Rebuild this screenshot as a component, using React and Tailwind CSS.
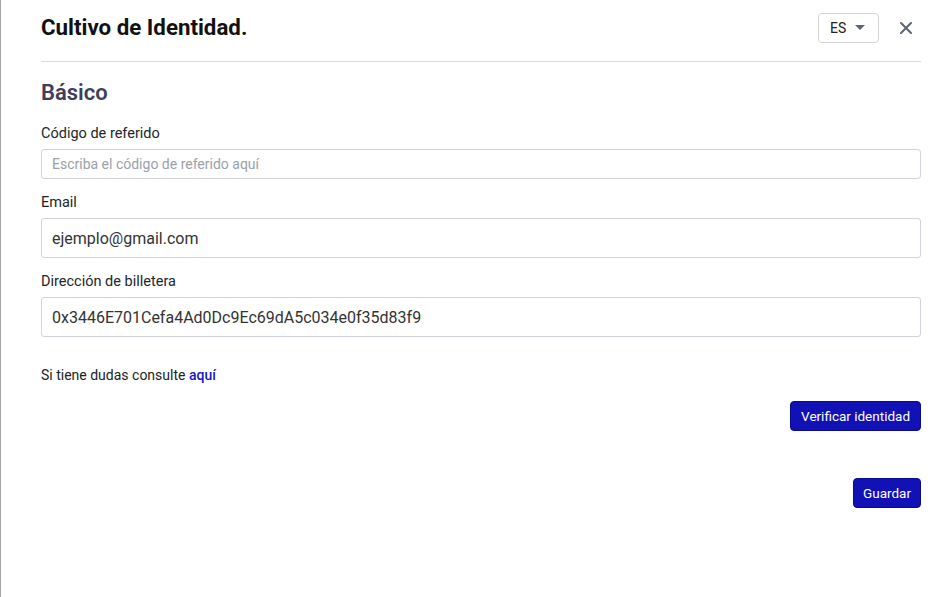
import React from "react";

function Caret() {
  return (
    <svg width="10" height="6" viewBox="0 0 10 6" className="ml-[9px]">
      <path d="M0 0 L10 0 L5 5 Z" fill="#5b6573" />
    </svg>
  );
}

function CloseIcon() {
  return (
    <svg width="12" height="12" viewBox="0 0 12 12">
      <path d="M1 1 L11 11 M11 1 L1 11" stroke="#5b6573" strokeWidth="2" strokeLinecap="round" />
    </svg>
  );
}

function Field({ label, children }) {
  return (
    <div className="flex flex-col">
      <label className="text-[14.5px] leading-[20px] text-[#212529] mb-[5px]">{label}</label>
      {children}
    </div>
  );
}

export default function App() {
  return (
    <div className="flex h-[597px] w-[950px] overflow-hidden bg-white" style={{ fontFamily: "Roboto, 'Noto Sans', sans-serif" }}>
      {/* backdrop sliver behind the dialog */}
      <div className="w-[1px] shrink-0 bg-[#a3a7a6]" />
      <div className="flex flex-1 flex-col bg-white pl-[40px] pr-[29px]">
        <div className="flex h-[62px] items-center justify-between border-b border-[#dadada] pb-[5px]">
          <h1 className="text-[22.3px] font-bold text-[#111111]">Cultivo de Identidad.</h1>
          <div className="flex items-center">
            <button className="flex h-[30px] w-[61px] items-center rounded-[4px] border border-[#d4d4d4] pl-[11px] text-[14px] text-[#222222]">
              ES
              <Caret />
            </button>
            <button className="ml-[21px] mr-[9px] flex items-center">
              <CloseIcon />
            </button>
          </div>
        </div>

        <h2 className="mt-[17px] text-[22px] leading-[28px] font-semibold text-[#3f3e58]">Básico</h2>

        <div className="mt-[17px] flex flex-col gap-[14px]">
          <Field label="Código de referido">
            <input
              className="h-[30px] w-full rounded-[3px] border border-[#ced4da] px-[10px] text-[14px] outline-none placeholder:text-[#9aa1a9]"
              placeholder="Escriba el código de referido aquí"
            />
          </Field>
          <Field label="Email">
            <input
              className="h-[40px] w-full rounded-[3px] border border-[#ced4da] px-[10px] text-[16px] text-[#333333] outline-none"
              defaultValue="ejemplo@gmail.com"
            />
          </Field>
          <Field label="Dirección de billetera">
            <input
              className="h-[40px] w-full rounded-[3px] border border-[#ced4da] px-[10px] text-[16px] text-[#333333] outline-none"
              defaultValue="0x3446E701Cefa4Ad0Dc9Ec69dA5c034e0f35d83f9"
            />
          </Field>
        </div>

        <p className="mt-[28px] text-[14px] leading-[20px] text-[#222222]">
          Si tiene dudas consulte <a className="font-medium text-[#1616c8]">aquí</a>
        </p>

        <div className="mt-[16px] flex justify-end">
          <button className="h-[30px] rounded-[4px] border border-[#0a0a8c] bg-[#1111b5] px-[10px] text-[13.5px] text-white">
            Verificar identidad
          </button>
        </div>
        <div className="mt-[47px] flex justify-end">
          <button className="h-[30px] rounded-[4px] border border-[#0a0a8c] bg-[#1111b5] px-[9px] text-[13.5px] text-white">
            Guardar
          </button>
        </div>
      </div>
    </div>
  );
}
